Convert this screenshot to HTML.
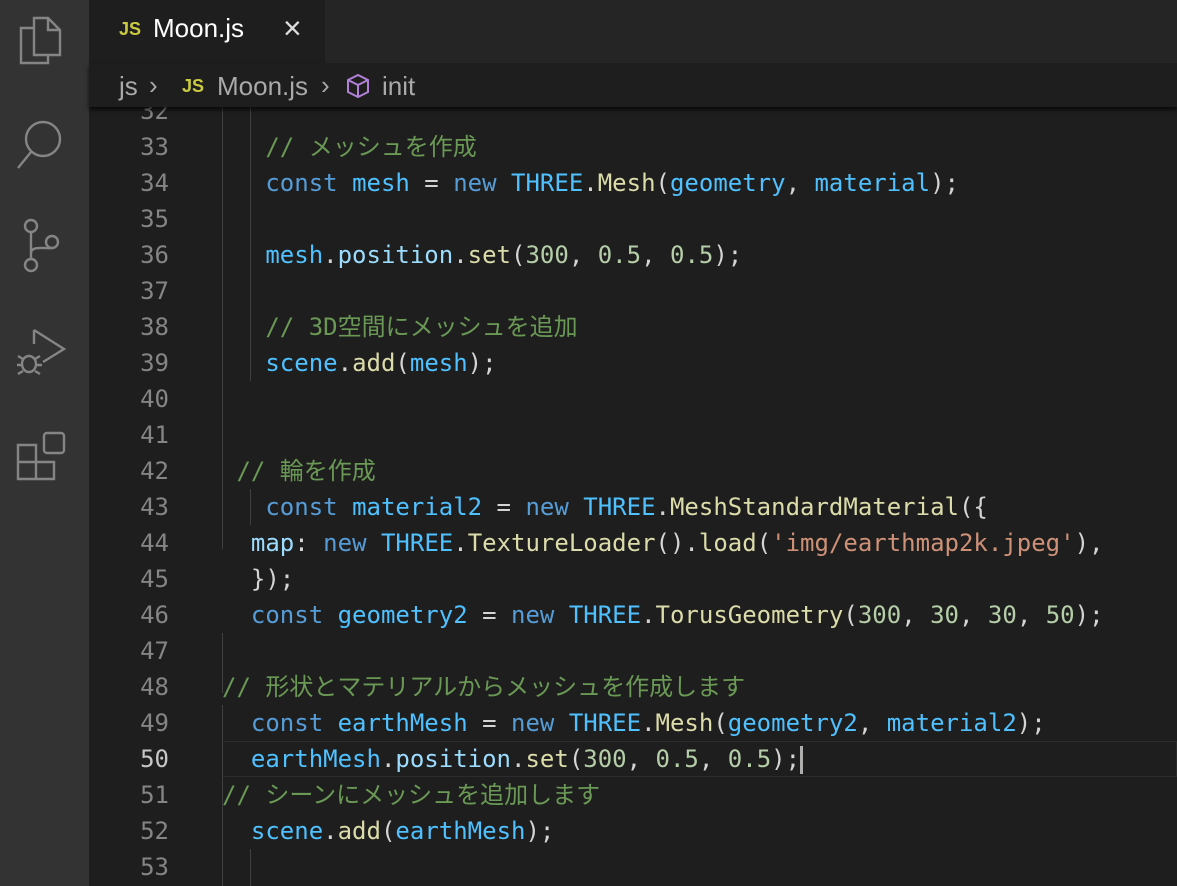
<!DOCTYPE html>
<html><head><meta charset="utf-8"><style>
body{margin:0;width:1177px;height:886px;overflow:hidden;background:#1e1e1e;font-family:"Liberation Sans","Noto Sans CJK JP",sans-serif;position:relative}
#act{position:absolute;left:0;top:0;width:89px;height:886px;background:#333}
#tabs{position:absolute;left:89px;top:0;right:0;height:63px;background:#252526}
#tab{position:absolute;left:89px;top:0;width:236px;height:63px;background:#1e1e1e;color:#fff;font-size:26px}
#bc{position:absolute;left:89px;top:63px;right:0;height:44px;background:#1e1e1e;color:#a9a9a9;font-size:26px;box-shadow:0 3px 4px #000a;z-index:2}
.js{color:#cbcb41;font-weight:bold;font-size:18px}
#ed{position:absolute;left:89px;top:107px;right:0;bottom:0;overflow:hidden}
.ln{position:absolute;left:0;width:80px;text-align:right;color:#858585;font:24px/36px "DejaVu Sans Mono",monospace}
.c{position:absolute;left:133px;white-space:pre;font:24px/36px "DejaVu Sans Mono","Noto Sans CJK JP",monospace;color:#d4d4d4}
.g{position:absolute;width:1px;background:#404040}
.k{color:#569cd6}.v{color:#4fc1ff}.f{color:#dcdcaa}.n{color:#b5cea8}.s{color:#ce9178}.cm{color:#6a9955}.p{color:#9cdcfe}
</style></head><body>
<div id="act">
<svg width="89" height="500" fill="none" stroke="#858585" stroke-width="2.4">
<path d="M34 18h14l12 12v25h-26z M48 18v12h12"/><path d="M34 28h-13v35h27v-8"/>
<circle cx="43" cy="139" r="17"/><path d="M31 152l-13 16"/>
<circle cx="31" cy="226" r="6"/><circle cx="31" cy="265" r="6"/><circle cx="52" cy="242" r="6"/><path d="M31 232v27 M31 253c0-8 18-4 21-5"/>
<path d="M34 330l30 19-21 13 M34 330v14"/><ellipse cx="29" cy="364" rx="7" ry="8"/><path d="M18 356l5 3M18 374l5-3M40 356l-5 3M40 374l-5-3M17 365h5M37 365h5"/>
<path d="M18 445h18v34h-18z M18 462h36v17h-18"/><rect x="44" y="433" width="20" height="20" rx="3"/>
</svg></div>
<div id="tabs"></div>
<div id="tab"><span class="js" style="position:absolute;left:30px;top:19px">JS</span><span style="position:absolute;left:64px;top:13px">Moon.js</span><span style="position:absolute;left:194px;top:10px;font-size:32px;color:#ddd">×</span></div>
<div id="bc"><span style="position:absolute;left:30px;top:8px">js</span><span style="position:absolute;left:60px;top:7px">›</span><span class="js" style="position:absolute;left:93px;top:13px">JS</span><span style="position:absolute;left:128px;top:8px">Moon.js</span><span style="position:absolute;left:232px;top:7px">›</span>
<svg style="position:absolute;left:256px;top:10px" width="26" height="26" fill="none" stroke="#b180d7" stroke-width="2"><path d="M13 2l10 5v12l-10 5-10-5V7z M3 7l10 5 10-5 M13 12v12"/></svg><span style="position:absolute;left:293px;top:8px">init</span></div>
<div id="ed">
<div style="position:absolute;left:133px;top:634px;right:0;height:34px;border:1px solid #2c2c2c"></div>
<div class="g" style="left:133px;top:0;height:442px"></div>
<div class="g" style="left:161px;top:0;height:274px"></div>
<div class="g" style="left:161px;top:382px;height:36px"></div>
<div class="g" style="left:133px;top:526px;height:60px"></div>
<div class="g" style="left:133px;top:598px;height:108px"></div>
<div class="g" style="left:133px;top:706px;height:100px"></div>
<div class="g" style="left:161px;top:742px;height:50px"></div>
<div class="ln" style="top:-14px">32</div><div class="ln" style="top:22px">33</div><div class="ln" style="top:58px">34</div><div class="ln" style="top:94px">35</div><div class="ln" style="top:130px">36</div><div class="ln" style="top:166px">37</div><div class="ln" style="top:202px">38</div><div class="ln" style="top:238px">39</div><div class="ln" style="top:274px">40</div><div class="ln" style="top:310px">41</div><div class="ln" style="top:346px">42</div><div class="ln" style="top:382px">43</div><div class="ln" style="top:418px">44</div><div class="ln" style="top:454px">45</div><div class="ln" style="top:490px">46</div><div class="ln" style="top:526px">47</div><div class="ln" style="top:562px">48</div><div class="ln" style="top:598px">49</div><div class="ln" style="top:634px;color:#c6c6c6">50</div><div class="ln" style="top:670px">51</div><div class="ln" style="top:706px">52</div><div class="ln" style="top:742px">53</div>
<div class="c" style="top:22px">   <span class="cm">// メッシュを作成</span></div>
<div class="c" style="top:58px">   <span class="k">const</span> <span class="v">mesh</span> = <span class="k">new</span> <span class="v">THREE</span>.<span class="f">Mesh</span>(<span class="v">geometry</span>, <span class="v">material</span>);</div>
<div class="c" style="top:130px">   <span class="v">mesh</span>.<span class="p">position</span>.<span class="f">set</span>(<span class="n">300</span>, <span class="n">0.5</span>, <span class="n">0.5</span>);</div>
<div class="c" style="top:202px">   <span class="cm">// 3D空間にメッシュを追加</span></div>
<div class="c" style="top:238px">   <span class="v">scene</span>.<span class="f">add</span>(<span class="v">mesh</span>);</div>
<div class="c" style="top:346px"> <span class="cm">// 輪を作成</span></div>
<div class="c" style="top:382px">   <span class="k">const</span> <span class="v">material2</span> = <span class="k">new</span> <span class="v">THREE</span>.<span class="f">MeshStandardMaterial</span>({</div>
<div class="c" style="top:418px">  <span class="p">map</span>: <span class="k">new</span> <span class="v">THREE</span>.<span class="f">TextureLoader</span>().<span class="f">load</span>(<span class="s">'img/earthmap2k.jpeg'</span>),</div>
<div class="c" style="top:454px">  });</div>
<div class="c" style="top:490px">  <span class="k">const</span> <span class="v">geometry2</span> = <span class="k">new</span> <span class="v">THREE</span>.<span class="f">TorusGeometry</span>(<span class="n">300</span>, <span class="n">30</span>, <span class="n">30</span>, <span class="n">50</span>);</div>
<div class="c" style="top:562px"><span class="cm">// 形状とマテリアルからメッシュを作成します</span></div>
<div class="c" style="top:598px">  <span class="k">const</span> <span class="v">earthMesh</span> = <span class="k">new</span> <span class="v">THREE</span>.<span class="f">Mesh</span>(<span class="v">geometry2</span>, <span class="v">material2</span>);</div>
<div class="c" style="top:634px">  <span class="v">earthMesh</span>.<span class="p">position</span>.<span class="f">set</span>(<span class="n">300</span>, <span class="n">0.5</span>, <span class="n">0.5</span>);<span style="display:inline-block;width:3px;height:28px;background:#aeafad;vertical-align:middle"></span></div>
<div class="c" style="top:670px"><span class="cm">// シーンにメッシュを追加します</span></div>
<div class="c" style="top:706px">  <span class="v">scene</span>.<span class="f">add</span>(<span class="v">earthMesh</span>);</div>
</div>
</body></html>
